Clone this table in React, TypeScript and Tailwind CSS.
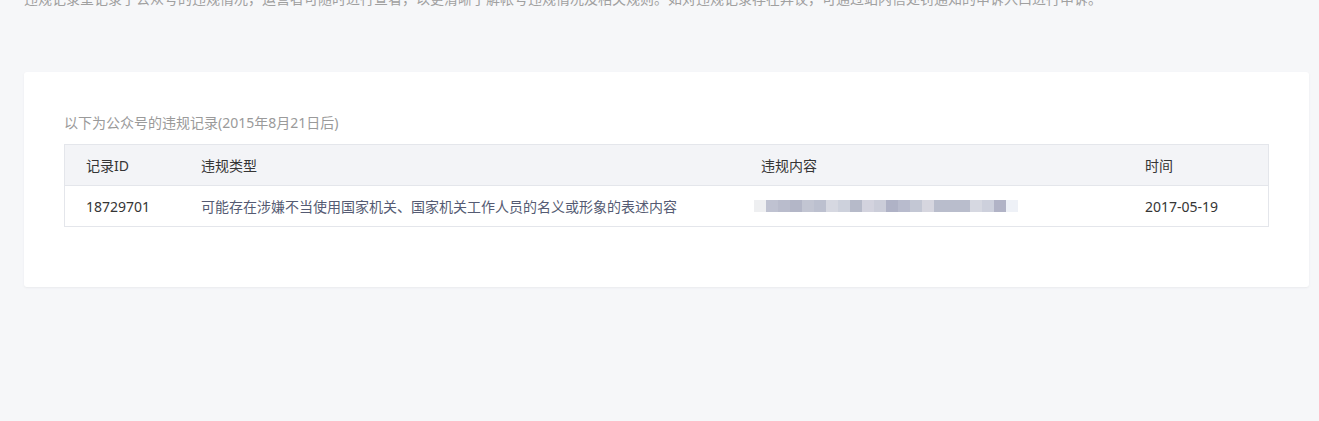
const mosaic = [
  "#eeeff1", "#bfc2d1", "#b9bccc", "#b3b6c7", "#c2c5d2", "#bcc0cf", "#d6d8e1", "#cdd1dc",
  "#b6bac9", "#d3d3de", "#cbcdd9", "#afb2c6", "#b8bbcd", "#c3c7d4", "#d6d6df", "#b9bdcc",
  "#b9bdcc", "#b9bdcc", "#d6d8e1", "#cdd0dc", "#b1b3c6", "#eef1f7",
];

const records = [
  { id: "18729701", type: "可能存在涉嫌不当使用国家机关、国家机关工作人员的名义或形象的表述内容", time: "2017-05-19" },
];

export default function App() {
  return (
    <div
      className="min-h-[421px] bg-[#f6f7f9] px-[24px] overflow-hidden"
      style={{ fontFamily: '"Noto Sans", "Noto Sans CJK SC", sans-serif' }}
    >
      <p className="-mt-[12px] h-[22px] leading-[22px] text-[14px] text-[#a0a0a0] whitespace-nowrap">
        违规记录呈记录了公众号的违规情况，运营者可随时进行查看，以更清晰了解帐号违规情况及相关规则。如对违规记录存在异议，可通过站内信处罚通知的申诉入口进行申诉。
      </p>

      <div className="mt-[62px] w-[1285px] rounded-[3px] bg-white shadow-[0_1px_2px_rgba(150,150,160,0.12)] px-[40px] pt-[40px] pb-[60px]">
        <div className="h-[22px] leading-[22px] text-[14px] text-[#9a9a9a]">
          以下为公众号的违规记录(2015年8月21日后)
        </div>
        <div className="mt-[10px] border border-[#e4e6eb] text-[14px]">
          <div className="flex h-[41px] items-center bg-[#f3f4f7] border-b border-[#e4e6eb] text-[#353535]">
            <div className="w-[114px] pl-[21px]">记录ID</div>
            <div className="w-[560px] pl-[22px]">违规类型</div>
            <div className="w-[384px] pl-[22px]">违规内容</div>
            <div className="flex-1 pl-[22px]">时间</div>
          </div>
          {records.map((r) => (
            <div key={r.id} className="flex h-[40px] items-center bg-white">
              <div className="w-[114px] pl-[21px] text-[#353535]">{r.id}</div>
              <div className="w-[560px] pl-[22px] text-[#555b73] whitespace-nowrap">{r.type}</div>
              <div className="w-[384px] pl-[15px] flex">
                {mosaic.map((c, i) => (
                  <span key={i} className="block h-[12px] w-[12px]" style={{ backgroundColor: c }} />
                ))}
              </div>
              <div className="flex-1 pl-[22px] text-[#353535]">{r.time}</div>
            </div>
          ))}
        </div>
      </div>
    </div>
  );
}
